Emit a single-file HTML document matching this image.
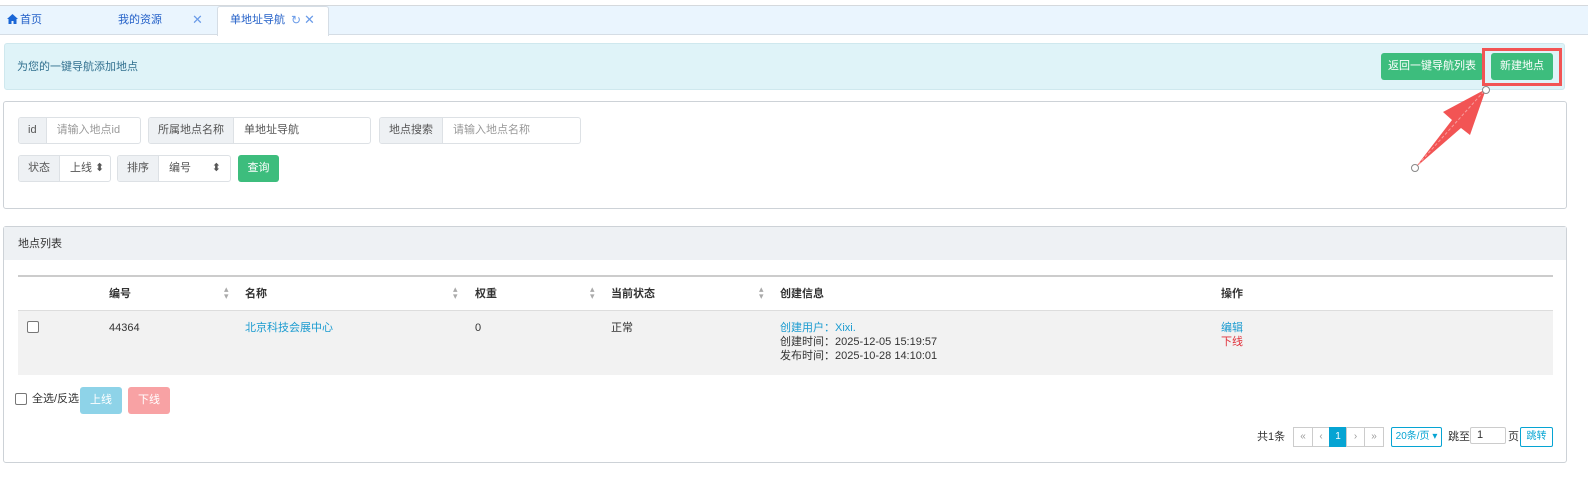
<!DOCTYPE html>
<html><head><meta charset="utf-8"><style>
*{box-sizing:border-box;margin:0;padding:0;white-space:nowrap}
body{width:1588px;height:477px;background:#fff;font-family:"Liberation Sans","Noto Sans CJK SC",sans-serif;font-size:11px;line-height:14px;color:#333;position:relative;overflow:hidden}
.a{position:absolute}
.grp{position:absolute;display:flex;height:27px;border:1px solid #dde1e5;border-radius:3px;overflow:hidden;background:#fff}
.grp .l{flex-shrink:0;background:#eef1f4;border-right:1px solid #dde1e5;padding:0 9px;line-height:25px;color:#555}
.grp .v{flex-shrink:0;padding:0 10px;line-height:25px;color:#999}
.btn{position:absolute;color:#fff;background:#3dbd7d;border-radius:3px;text-align:center}
.th{position:absolute;top:287px;font-weight:bold;color:#333}
.pg{position:absolute;top:427px;height:20px;border:1px solid #ccc;text-align:center;line-height:18px;color:#999;font-size:10px}
</style></head><body>
<div class="a" style="left:0;top:5px;width:1588px;height:1px;background:#d5d9dd"></div>
<div class="a" style="left:0;top:6px;width:1588px;height:29px;background:#eaf5fe;border-bottom:1px solid #d5dde5"></div>
<div class="a" style="left:217px;top:6px;width:112px;height:30px;background:#fff;border:1px solid #d5dde5;border-bottom:none;border-radius:3px 3px 0 0"></div>
<svg class="a" style="left:7px;top:14px" width="11" height="10" viewBox="0 0 11 10"><path d="M5.5 0L0 5h1.5v5h3V7h2v3h3V5H11z" fill="#1a66d6"/></svg>
<div class="a" style="left:20px;top:13px;color:#2461c8">首页</div>
<div class="a" style="left:118px;top:13px;color:#2461c8">我的资源</div>
<div class="a" style="left:192px;top:13px;color:#6a9be8;font-size:13px">✕</div>
<div class="a" style="left:230px;top:13px;color:#2461c8">单地址导航</div>
<div class="a" style="left:291px;top:13px;color:#6a9be8;font-size:12px">↻</div>
<div class="a" style="left:304px;top:13px;color:#6a9be8;font-size:13px">✕</div>

<div class="a" style="left:4px;top:43px;width:1561px;height:47px;background:#dff3f8;border:1px solid #cfe8ee;border-radius:3px"></div>
<div class="a" style="left:17px;top:60px;color:#31708f">为您的一键导航添加地点</div>
<div class="btn" style="left:1381px;top:53px;width:102px;height:27px;line-height:27px">返回一键导航列表</div>
<div class="btn" style="left:1491px;top:53px;width:62px;height:27px;line-height:27px">新建地点</div>
<div class="a" style="left:1482px;top:48px;width:80px;height:38px;border:3px solid #f25454"></div>

<div class="a" style="left:3px;top:101px;width:1564px;height:108px;border:1px solid #cdd2d7;border-radius:3px"></div>
<div class="grp" style="left:18px;top:117px;width:123px"><div class="l">id</div><div class="v">请输入地点id</div></div>
<div class="grp" style="left:148px;top:117px;width:223px"><div class="l">所属地点名称</div><div class="v" style="color:#555">单地址导航</div></div>
<div class="grp" style="left:379px;top:117px;width:202px"><div class="l">地点搜索</div><div class="v">请输入地点名称</div></div>
<div class="grp" style="left:18px;top:155px;width:93px"><div class="l">状态</div><div class="v" style="color:#555">上线 ⬍</div></div>
<div class="grp" style="left:117px;top:155px;width:114px"><div class="l">排序</div><div class="v" style="color:#555;width:72px">编号<span style="float:right">⬍</span></div></div>
<div class="btn" style="left:238px;top:155px;width:41px;height:27px;line-height:27px">查询</div>

<svg class="a" style="left:0;top:0" width="1588" height="477"><polygon points="1415,168 1452,120 1443,112 1486,89 1470,135 1461,128" fill="#f25454"/><line x1="1415" y1="168" x2="1486" y2="89" stroke="#f7a0a0" stroke-dasharray="3,2"/><circle cx="1415" cy="168" r="3.5" fill="#fff" stroke="#888"/><circle cx="1486" cy="90" r="3.5" fill="#fff" stroke="#888"/></svg>

<div class="a" style="left:3px;top:226px;width:1564px;height:237px;border:1px solid #cdd2d7;border-radius:3px"></div>
<div class="a" style="left:4px;top:227px;width:1562px;height:33px;background:#eef1f4"></div>
<div class="a" style="left:18px;top:237px">地点列表</div>
<div class="a" style="left:18px;top:275px;width:1535px;height:2px;background:#ccc"></div>
<div class="th" style="left:109px">编号</div><div class="th" style="left:245px">名称</div><div class="th" style="left:475px">权重</div><div class="th" style="left:611px">当前状态</div><div class="th" style="left:780px">创建信息</div><div class="th" style="left:1221px">操作</div>
<div class="a" style="left:224px;top:286px;color:#aaa;font-size:9px;line-height:7px">▴<br>▾</div>
<div class="a" style="left:453px;top:286px;color:#aaa;font-size:9px;line-height:7px">▴<br>▾</div>
<div class="a" style="left:590px;top:286px;color:#aaa;font-size:9px;line-height:7px">▴<br>▾</div>
<div class="a" style="left:759px;top:286px;color:#aaa;font-size:9px;line-height:7px">▴<br>▾</div>
<div class="a" style="left:18px;top:310px;width:1535px;height:65px;background:#f2f2f2;border-top:1px solid #ddd"></div>
<div class="a" style="left:27px;top:321px;width:12px;height:12px;border:1px solid #777;border-radius:2px;background:#fff"></div>
<div class="a" style="left:109px;top:321px">44364</div>
<div class="a" style="left:245px;top:321px;color:#1a9bd0">北京科技会展中心</div>
<div class="a" style="left:475px;top:321px">0</div>
<div class="a" style="left:611px;top:321px">正常</div>
<div class="a" style="left:780px;top:321px;line-height:14px"><span style="color:#1a9bd0">创建用户：Xixi.</span><br>创建时间：2025-12-05 15:19:57<br>发布时间：2025-10-28 14:10:01</div>
<div class="a" style="left:1221px;top:321px;line-height:14px"><span style="color:#1a9bd0">编辑</span><br><span style="color:#e0313b">下线</span></div>
<div class="a" style="left:15px;top:393px;width:12px;height:12px;border:1px solid #777;border-radius:2px"></div>
<div class="a" style="left:32px;top:392px">全选/反选</div>
<div class="a" style="left:80px;top:387px;width:42px;height:27px;background:#8ed3e8;color:#fff;border-radius:3px;text-align:center;line-height:27px">上线</div>
<div class="a" style="left:128px;top:387px;width:42px;height:27px;background:#f8a2a4;color:#fff;border-radius:3px;text-align:center;line-height:27px">下线</div>
<div class="a" style="left:1257px;top:430px">共1条</div>
<div class="pg" style="left:1293px;width:20px">«</div><div class="pg" style="left:1312px;width:18px">‹</div><div class="pg" style="left:1329px;width:18px;background:#06a4d3;border-color:#06a4d3;color:#fff">1</div><div class="pg" style="left:1346px;width:19px">›</div><div class="pg" style="left:1364px;width:20px">»</div>
<div class="pg" style="left:1391px;width:51px;border-color:#06a4d3;color:#06a4d3;border-radius:2px">20条/页 ▾</div>
<div class="a" style="left:1448px;top:430px">跳至</div>
<div class="a" style="left:1470px;top:427px;width:36px;height:17px;border:1px solid #ccc;border-radius:2px;padding-left:6px;line-height:15px">1</div>
<div class="a" style="left:1508px;top:430px">页</div>
<div class="pg" style="left:1520px;width:33px;border-color:#06a4d3;color:#06a4d3;border-radius:2px">跳转</div>
</body></html>
